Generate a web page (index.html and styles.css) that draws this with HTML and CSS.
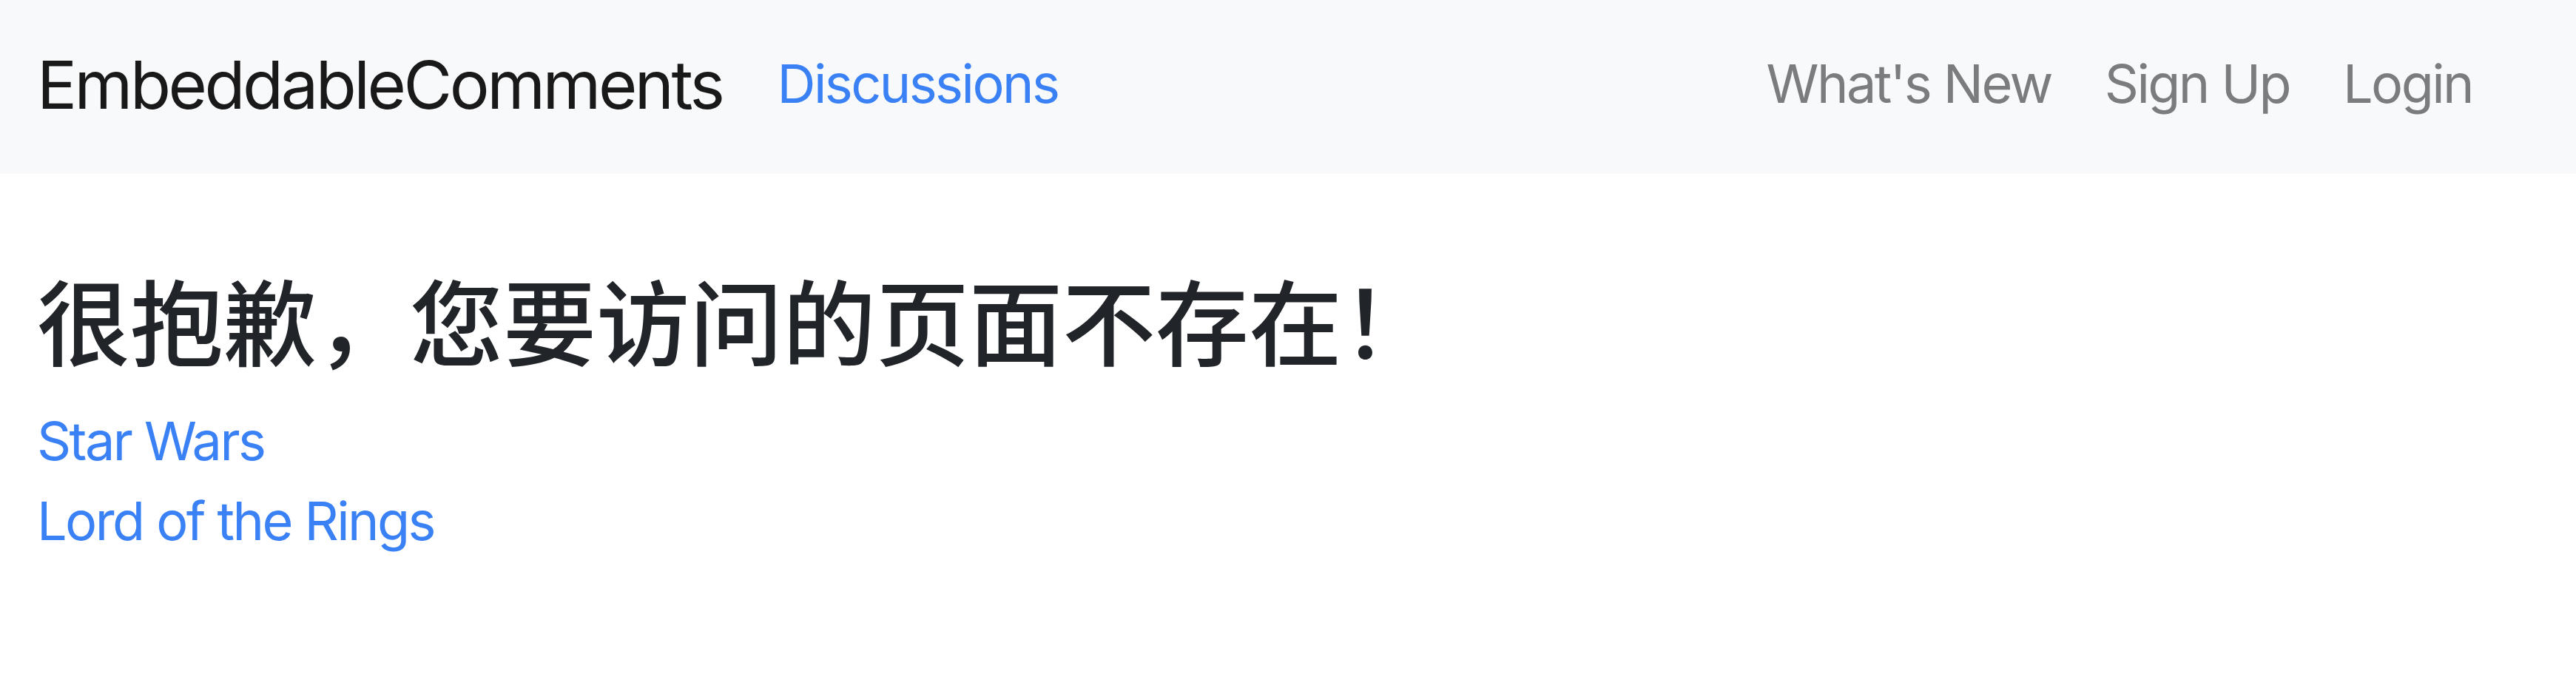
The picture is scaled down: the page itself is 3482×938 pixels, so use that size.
FILE: index.html
```html
<!DOCTYPE html>
<html lang="zh-CN">
<head>
<meta charset="utf-8">
<title>EmbeddableComments</title>
<link rel="stylesheet" href="styles.css">
</head>
<body>
<nav class="navbar">
  <a class="brand" href="#">EmbeddableComments</a>
  <a class="nav-main" href="#">Discussions</a>
  <ul class="nav-right">
    <li><a class="nav-link" href="#">What's New</a></li>
    <li><a class="nav-link" href="#">Sign Up</a></li>
    <li><a class="nav-link" href="#">Login</a></li>
  </ul>
</nav>
<main class="content">
  <h1 class="title">很抱歉，您要访问的页面不存在！</h1>
  <a class="topic-link" href="#">Star Wars</a>
  <a class="topic-link" href="#">Lord of the Rings</a>
</main>
</body>
</html>
```

FILE: styles.css
```css
html, body {
  margin: 0;
  padding: 0;
  background: #ffffff;
}

body {
  font-family: Inter, "Noto Sans", "Noto Sans CJK SC", sans-serif;
  font-size: 72px;
  line-height: 1.5;
  letter-spacing: -0.036em;
  color: #212529;
}

a {
  text-decoration: none;
}

.navbar {
  display: flex;
  align-items: center;
  height: 235px;
  box-sizing: border-box;
  padding: 0 104px 0 50px;
  background: #f8f9fa;
}

.brand {
  font-size: 90px;
  line-height: 1;
  letter-spacing: -0.039em;
  color: #191919;
  transform: translateY(-3px);
}

.nav-main {
  margin-left: 74px;
  font-size: 72px;
  line-height: 1;
  color: #3a81f6;
  transform: translateY(-5px);
}

.nav-right {
  display: flex;
  margin: 0 0 0 auto;
  padding: 0;
  list-style: none;
  transform: translateY(-5px);
}

.nav-right li {
  display: block;
}

.nav-link {
  display: block;
  padding: 0 36px;
  font-size: 72px;
  line-height: 1;
  color: #7b7c7d;
}

.content {
  display: flex;
  flex-direction: column;
  align-items: flex-start;
  padding: 120px 50px 0;
}

.title {
  margin: 0 0 36px;
  font-family: "Noto Sans CJK SC", sans-serif;
  font-size: 126px;
  font-weight: 500;
  line-height: 1.2;
  letter-spacing: 0;
  color: #212529;
}

.topic-link {
  color: #3a81f6;
  line-height: 108px;
}
```
